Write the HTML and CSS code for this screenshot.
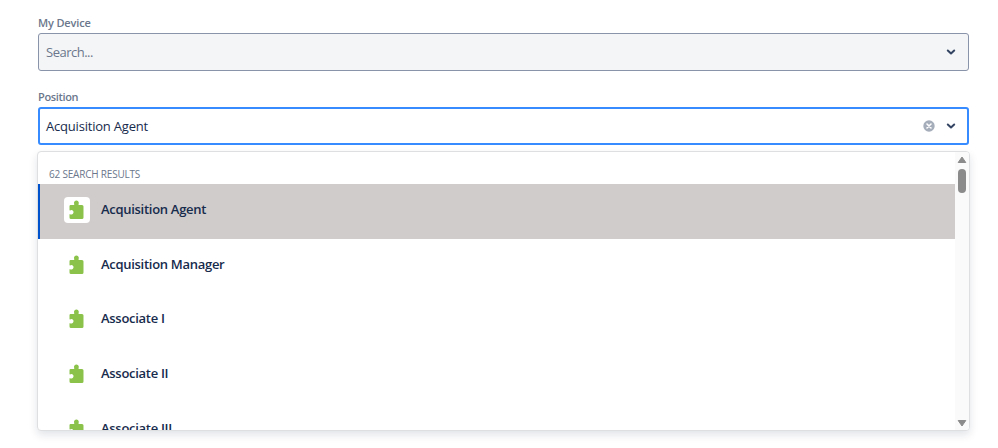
FILE: index.html
```html
<!DOCTYPE html>
<html lang="en">
<head>
<meta charset="utf-8">
<title>Device form</title>
<link rel="stylesheet" href="styles.css">
</head>
<body>
<svg width="0" height="0" class="defs" aria-hidden="true">
  <symbol id="puzzle" viewBox="0 0 15 20">
    <path d="M1.6 5H5.1C5.5 4.6 5 3.7 5 2.8C5 1.3 6 .4 7.4 .4S9.8 1.3 9.8 2.8C9.8 3.7 9.3 4.6 9.7 5H13Q14.5 5 14.5 6.5V17.500Q14.500 19 13 19H2Q.5 19 .5 17.500V14.300C1.200 14 1.700 14.500 2.500 14.500C3.700 14.500 4.500 13.500 4.500 12.300S3.700 10.100 2.500 10.100C1.700 10.100 1.200 10.600 .5 10.300V6.300Q.5 5 1.600 5Z" fill="#8bc34a"/>
  </symbol>
  <symbol id="chevron" viewBox="0 0 10 8">
    <path d="M1.800 2.500L5 5.500L8.200 2.500" fill="none" stroke="#344563" stroke-width="2" stroke-linecap="round" stroke-linejoin="round"/>
  </symbol>
</svg>
<main class="form">
  <div class="label device">My Device</div>
  <div class="select muted"><span class="value search">Search...</span><svg class="chevron"><use href="#chevron"/></svg></div>
  <div class="label position">Position</div>
  <div class="select focused">
    <span class="value chosen">Acquisition Agent</span>
    <svg class="clear" viewBox="0 0 12 12"><circle cx="6" cy="6" r="5.700" fill="#a5adba"/><path d="M4 4L8 8M8 4L4 8" stroke="#fff" stroke-width="1.600" stroke-linecap="round"/></svg>
    <svg class="chevron"><use href="#chevron"/></svg>
  </div>
  <div class="menu">
    <div class="list">
      <div class="heading"><span>62 SEARCH RESULTS</span></div>
      <div class="option active"><span class="icon"><svg><use href="#puzzle"/></svg></span><span class="name">Acquisition Agent</span></div>
      <div class="option"><span class="icon"><svg><use href="#puzzle"/></svg></span><span class="name">Acquisition Manager</span></div>
      <div class="option"><span class="icon"><svg><use href="#puzzle"/></svg></span><span class="name">Associate I</span></div>
      <div class="option"><span class="icon"><svg><use href="#puzzle"/></svg></span><span class="name">Associate II</span></div>
      <div class="option"><span class="icon"><svg><use href="#puzzle"/></svg></span><span class="name">Associate III</span></div>
    </div>
    <div class="scrollbar">
      <svg class="arrow" viewBox="0 0 10 8"><path d="M5 1L8.800 6.500H1.200Z" fill="#8b8b8b" stroke="#8b8b8b" stroke-linejoin="round"/></svg>
      <div class="thumb"></div>
      <svg class="arrow down" viewBox="0 0 10 8"><path d="M1.200 1.500H8.800L5 7Z" fill="#8b8b8b" stroke="#8b8b8b" stroke-linejoin="round"/></svg>
    </div>
  </div>
</main>
</body>
</html>
```
FILE: styles.css
```css
* { box-sizing: border-box; }
body { margin: 0; background: #fff; color: #172b4d; font-family: "Open Sans", sans-serif; height: 448px; overflow: hidden; }
.defs { display: none; }
.form { padding: 15px 29px 0 38px; }
.label { height: 18px; line-height: 15px; font-size: 11px; font-weight: 600; color: #6b778c; }
.device { letter-spacing: -.15px; }
.position { letter-spacing: -.35px; }
.select { height: 38px; display: flex; align-items: center; padding: 0 12px 0 7px; border: 1px solid #8993a9; border-radius: 3px; }
.muted { background: #f4f5f7; color: #6b778c; margin-bottom: 18px; }
.focused { border: 2px solid #388bff; padding: 0 11px 0 6px; }
.value { flex: 1; font-size: 13px; line-height: 18px; white-space: nowrap; }
.search { letter-spacing: -.5px; }
.chosen { letter-spacing: -.2px; }
.chevron { width: 10px; height: 8px; }
.clear { width: 12px; height: 12px; margin-right: 11px; }
.menu { display: flex; height: 280px; margin: 6px -1px 0; border: 1px solid #dedfe1; border-radius: 4px; overflow: hidden; background: #fff; box-shadow: 0 4px 9px rgba(9,30,66,.12); }
.list { flex: 1; overflow: hidden; }
.heading { height: 32.400px; padding: 15px 0 0 11px; font-size: 10px; line-height: 15px; color: #6b778c; letter-spacing: -.2px; white-space: nowrap; }
.option { height: 54.700px; display: flex; align-items: flex-start; padding: 12.500px 0 0 24px; border-left: 2px solid transparent; }
.active { background: #d0cccb; border-color: #0052cc; }
.icon { width: 26px; height: 26px; display: flex; justify-content: center; align-items: center; border-radius: 4px; background: #fff; }
.icon svg { width: 15px; height: 20px; margin-right: 1px; }
.name { margin-left: 11px; font-size: 13px; line-height: 25px; font-weight: 600; letter-spacing: -.29px; white-space: nowrap; }
.scrollbar { width: 14px; background: #fafafa; display: flex; flex-direction: column; align-items: center; padding: 4px 0 3px; }
.arrow { width: 10px; height: 8px; }
.thumb { width: 8px; height: 24px; margin-top: 5px; background: #8b8b8b; border-radius: 4px; }
.down { margin-top: auto; }
```
